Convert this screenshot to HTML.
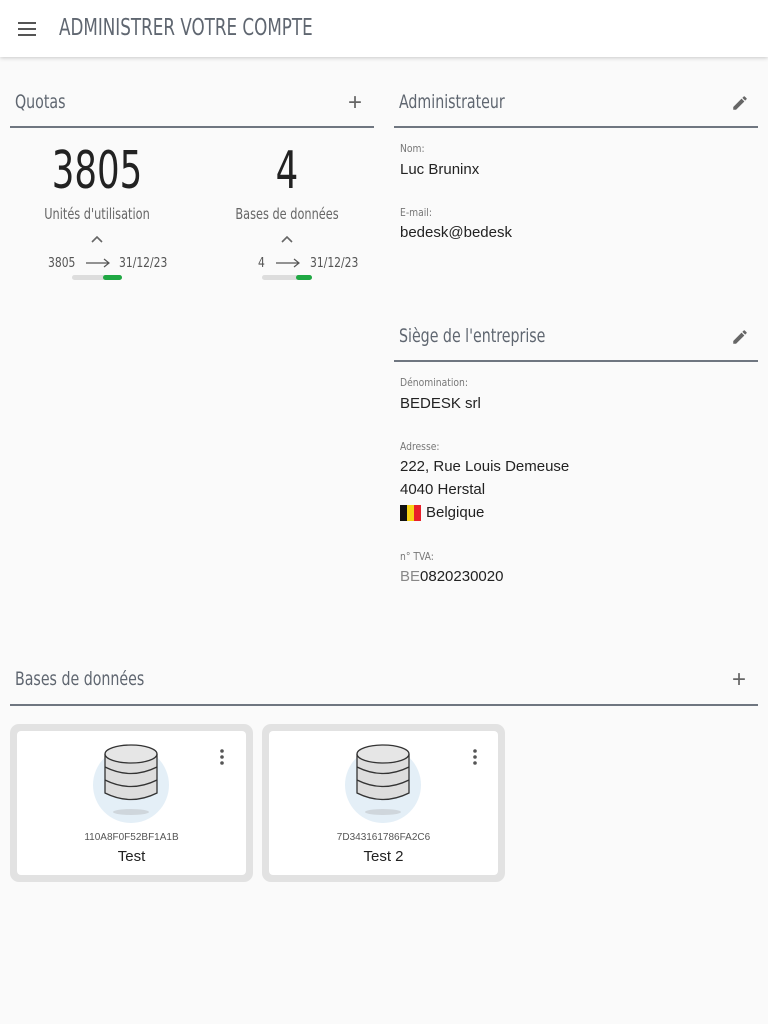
<!DOCTYPE html>
<html><head><meta charset="utf-8"><style>
*{margin:0;padding:0;box-sizing:border-box}
body{width:768px;height:1024px;background:#fafafa;font-family:"Liberation Sans",sans-serif;position:relative;overflow:hidden;color:#222}
.n{font-family:"Liberation Sans Narrow","DejaVu Sans Condensed","Liberation Sans",sans-serif}
.a{position:absolute;white-space:nowrap}
.sl{transform-origin:0 0}
.sc{transform-origin:50% 0}
.hdr{position:absolute;left:0;top:0;width:768px;height:57px;background:#fff;box-shadow:0 1px 4px rgba(0,0,0,.2)}
.h{font-size:19px;color:#5f6670;transform:scaleX(.83);transform-origin:0 0}
.line{position:absolute;height:2px;background:#6f7680}
.lbl{font-size:11px;color:#777;transform:scaleX(.93);transform-origin:0 0}
.val{font-size:15px;color:#222}
.card{position:absolute;top:724px;width:243px;height:158px;background:#e2e2e2;border-radius:9px}
.card .in{position:absolute;left:7px;top:7px;right:7px;bottom:7px;background:#fff;border-radius:4px}
.sm{font-size:13px;color:#555;transform:scaleX(.92);transform-origin:0 0}
</style></head><body>
<div class="hdr">
<svg class="a" style="left:18px;top:22px" width="19" height="14"><rect y="0" width="18" height="2" fill="#555"/><rect y="6" width="18" height="2" fill="#555"/><rect y="12" width="18" height="2" fill="#555"/></svg>
<div class="a n sl" style="left:59px;top:15px;font-size:23px;color:#5f6670;transform:scaleX(.81)">ADMINISTRER VOTRE COMPTE</div>
</div>

<div class="a n h" style="left:15px;top:91px">Quotas</div>
<div class="a" style="left:348px;top:89px;font-size:24px;color:#666;font-weight:300">+</div>
<div class="line" style="left:10px;top:126px;width:364px"></div>

<div class="a n sc" style="left:22px;width:150px;text-align:center;top:141px;font-size:52px;color:#222;transform:scaleX(.76)">3805</div>
<div class="a n sc" style="left:212px;width:150px;text-align:center;top:141px;font-size:52px;color:#222;transform:scaleX(.76)">4</div>
<div class="a n sc" style="left:22px;width:150px;text-align:center;top:205px;font-size:15px;color:#666;transform:scaleX(.84)">Unités d'utilisation</div>
<div class="a n sc" style="left:212px;width:150px;text-align:center;top:205px;font-size:15px;color:#666;transform:scaleX(.84)">Bases de données</div>
<svg class="a" style="left:91px;top:235px" width="12" height="8"><path d="M1 7L6 2L11 7" stroke="#666" stroke-width="1.6" fill="none"/></svg>
<svg class="a" style="left:281px;top:235px" width="12" height="8"><path d="M1 7L6 2L11 7" stroke="#666" stroke-width="1.6" fill="none"/></svg>
<div class="a n sm" style="left:48px;top:256px">3805</div>
<div class="a n sm" style="left:119px;top:256px">31/12/23</div>
<svg class="a" style="left:85px;top:258px" width="26" height="10"><path d="M1 5H24M19 1L24 5L19 9" stroke="#555" stroke-width="1.2" fill="none"/></svg>
<div class="a n sm" style="left:258px;top:256px">4</div>
<div class="a n sm" style="left:310px;top:256px">31/12/23</div>
<svg class="a" style="left:275px;top:258px" width="26" height="10"><path d="M1 5H24M19 1L24 5L19 9" stroke="#555" stroke-width="1.2" fill="none"/></svg>
<div class="a" style="left:72px;top:275px;width:50px;height:5px;border-radius:3px;background:#ddd"></div>
<div class="a" style="left:103px;top:275px;width:19px;height:5px;border-radius:3px;background:#1fa843"></div>
<div class="a" style="left:262px;top:275px;width:50px;height:5px;border-radius:3px;background:#ddd"></div>
<div class="a" style="left:296px;top:275px;width:16px;height:5px;border-radius:3px;background:#1fa843"></div>

<div class="a n h" style="left:399px;top:91px">Administrateur</div>
<svg class="a" style="left:731px;top:94px" width="18" height="18" viewBox="0 0 24 24"><path d="M3 17.25V21h3.75L17.81 9.94l-3.75-3.75L3 17.25zM20.71 7.04a1 1 0 000-1.41l-2.34-2.34a1 1 0 00-1.41 0l-1.830 1.83 3.75 3.75 1.83-1.83z" fill="#666"/></svg>
<div class="line" style="left:394px;top:126px;width:364px"></div>
<div class="a n lbl" style="left:400px;top:142px">Nom:</div>
<div class="a val" style="left:400px;top:161px">Luc Bruninx</div>
<div class="a n lbl" style="left:400px;top:206px">E-mail:</div>
<div class="a val" style="left:400px;top:224px">bedesk@bedesk</div>

<div class="a n h" style="left:399px;top:325px">Siège de l'entreprise</div>
<svg class="a" style="left:731px;top:328px" width="18" height="18" viewBox="0 0 24 24"><path d="M3 17.25V21h3.75L17.81 9.94l-3.75-3.75L3 17.25zM20.71 7.04a1 1 0 000-1.41l-2.34-2.34a1 1 0 00-1.41 0l-1.83 1.83 3.75 3.75 1.83-1.83z" fill="#666"/></svg>
<div class="line" style="left:394px;top:360px;width:364px"></div>
<div class="a n lbl" style="left:400px;top:376px">Dénomination:</div>
<div class="a val" style="left:400px;top:395px">BEDESK srl</div>
<div class="a n lbl" style="left:400px;top:440px">Adresse:</div>
<div class="a val" style="left:400px;top:458px">222, Rue Louis Demeuse</div>
<div class="a val" style="left:400px;top:481px">4040 Herstal</div>
<div class="a" style="left:400px;top:505px;width:7px;height:16px;background:#111"></div>
<div class="a" style="left:407px;top:505px;width:7px;height:16px;background:#f7d416"></div>
<div class="a" style="left:414px;top:505px;width:7px;height:16px;background:#e8202a"></div>
<div class="a val" style="left:426px;top:504px">Belgique</div>
<div class="a n lbl" style="left:400px;top:550px">n° TVA:</div>
<div class="a val" style="left:400px;top:568px"><span style="color:#888">BE</span>0820230020</div>

<div class="a n h" style="left:15px;top:668px">Bases de données</div>
<div class="a" style="left:732px;top:666px;font-size:24px;color:#666;font-weight:300">+</div>
<div class="line" style="left:10px;top:704px;width:748px"></div>

<div class="card" style="left:10px"><div class="in"></div></div>
<div class="card" style="left:262px"><div class="in"></div></div>

<svg class="a" style="left:90px;top:742px" width="84" height="84" viewBox="0 0 84 84">
<circle cx="41" cy="43" r="38" fill="#e4eff7"/>
<ellipse cx="41" cy="70" rx="18" ry="3" fill="#cfd6dc"/>
<path d="M15 12V51Q41 64 67 51V12" fill="#ddd" stroke="#333" stroke-width="1.3"/>
<path d="M15 25Q41 38 67 25M15 38Q41 51 67 38" fill="none" stroke="#333" stroke-width="1.3"/>
<ellipse cx="41" cy="12" rx="26" ry="9" fill="#e6e6e6" stroke="#333" stroke-width="1.3"/>
</svg>
<svg class="a" style="left:342px;top:742px" width="84" height="84" viewBox="0 0 84 84">
<circle cx="41" cy="43" r="38" fill="#e4eff7"/>
<ellipse cx="41" cy="70" rx="18" ry="3" fill="#cfd6dc"/>
<path d="M15 12V51Q41 64 67 51V12" fill="#ddd" stroke="#333" stroke-width="1.3"/>
<path d="M15 25Q41 38 67 25M15 38Q41 51 67 38" fill="none" stroke="#333" stroke-width="1.3"/>
<ellipse cx="41" cy="12" rx="26" ry="9" fill="#e6e6e6" stroke="#333" stroke-width="1.3"/>
</svg>
<svg class="a" style="left:219px;top:749px" width="6" height="16"><circle cx="3" cy="2" r="1.8" fill="#555"/><circle cx="3" cy="8" r="1.8" fill="#555"/><circle cx="3" cy="14" r="1.8" fill="#555"/></svg>
<svg class="a" style="left:472px;top:749px" width="6" height="16"><circle cx="3" cy="2" r="1.8" fill="#555"/><circle cx="3" cy="8" r="1.8" fill="#555"/><circle cx="3" cy="14" r="1.8" fill="#555"/></svg>
<div class="a" style="left:17px;width:229px;text-align:center;top:832px;font-size:10px;color:#555">110A8F0F52BF1A1B</div>
<div class="a" style="left:17px;width:229px;text-align:center;top:848px;font-size:15px;color:#222">Test</div>
<div class="a" style="left:269px;width:229px;text-align:center;top:832px;font-size:10px;color:#555">7D343161786FA2C6</div>
<div class="a" style="left:269px;width:229px;text-align:center;top:848px;font-size:15px;color:#222">Test 2</div>
</body></html>
